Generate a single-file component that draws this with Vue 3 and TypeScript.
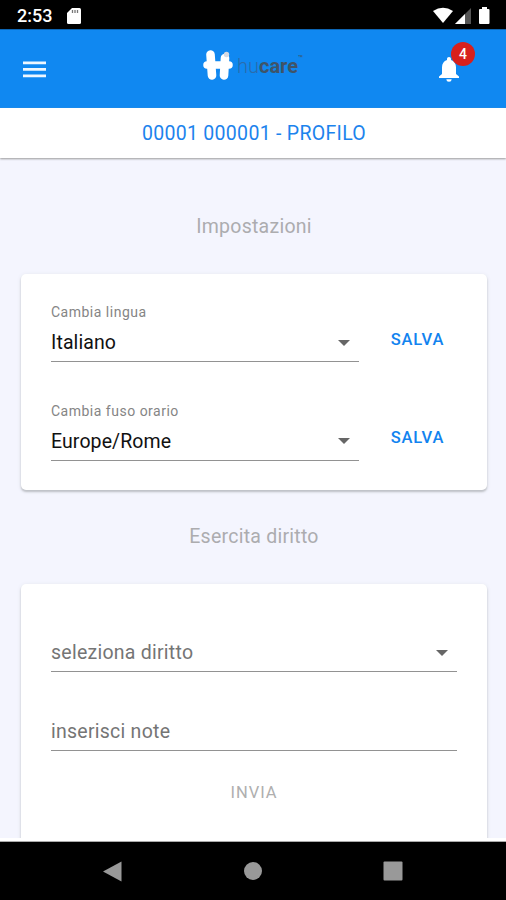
<script setup lang="ts">
interface Preference {
  label: string
  value: string
}

const preferences: Preference[] = [
  { label: 'Cambia lingua', value: 'Italiano' },
  { label: 'Cambia fuso orario', value: 'Europe/Rome' },
]
const notifications = 4
</script>

<template>
  <div class="screen">
    <div class="status">
      <span class="clock">2:53</span>
      <svg class="sd" viewBox="0 0 14 16" width="14" height="16">
        <path d="M5 0H12.5Q14 0 14 1.500V14.500Q14 16 12.500 16H1.500Q0 16 0 14.500V5Z" fill="#fff" />
        <path d="M5.500 2v3M8 2v3M10.500 2v3" stroke="#777" stroke-width="1.300" />
      </svg>
      <svg class="signals" viewBox="0 0 58 18" width="58" height="18">
        <path d="M0 4Q10 -2.500 20 4L10 16Z" fill="#fff" />
        <path d="M38 1V17H22Z" fill="#555" />
        <path d="M32 7V17H22Z" fill="#fff" />
        <path d="M49 2V0H54V2H55.500Q56.500 2 56.500 3V16Q56.500 17 55.500 17H47Q46 17 46 16V3Q46 2 47 2Z" fill="#fff" />
      </svg>
    </div>

    <header class="toolbar">
      <svg class="menu" viewBox="0 0 23 17" width="23" height="17">
        <path d="M0 1.800H23M0 8.300H23M0 14.800H23" stroke="#eef7ff" stroke-width="2.700" />
      </svg>
      <div class="brand">
        <svg viewBox="0 0 30 31" width="30" height="31">
          <path d="M7.500 4.500L9 25.500M22 8L21 25.500" stroke="#fff" stroke-width="8.600" stroke-linecap="round" />
          <path d="M4 15H26" stroke="#fff" stroke-width="7.500" stroke-linecap="round" />
          <circle cx="23.500" cy="4.500" r="2.700" fill="#d5d9e2" />
        </svg>
        <span class="word"><span class="hu">hu</span><b>care</b><span class="tm">™</span></span>
      </div>
      <div class="bell">
        <svg viewBox="0 0 20 25" width="20" height="25">
          <path d="M10 0C11.200 0 12 .8 12 2.100V3C15.200 4 17 6.800 17 10.300V17L20 19.500V21H0V19.500L3 17V10.300C3 6.800 4.800 4 8 3V2.100C8 .8 8.800 0 10 0Z" fill="#fff" />
          <path d="M7.300 22.200H12.700Q12.500 24.700 10 24.700T7.300 22.200Z" fill="#fff" />
        </svg>
        <span class="badge">{{ notifications }}</span>
      </div>
    </header>

    <div class="profile"><span>00001 000001 - PROFILO</span></div>

    <main class="content">
      <h2 class="title first">Impostazioni</h2>
      <section class="card prefs">
        <div v-for="item in preferences" :key="item.label" class="pref">
          <div class="field">
            <span class="label">{{ item.label }}</span>
            <div class="value">
              <span>{{ item.value }}</span>
              <svg viewBox="0 0 12 6" width="12" height="6"><path d="M0 0H12L6 6Z" fill="#666" /></svg>
            </div>
          </div>
          <button class="save">SALVA</button>
        </div>
      </section>

      <h2 class="title second">Esercita diritto</h2>
      <section class="card rights">
        <div class="value blank">
          <span>seleziona diritto</span>
          <svg viewBox="0 0 12 6" width="12" height="6"><path d="M0 0H12L6 6Z" fill="#666" /></svg>
        </div>
        <div class="value blank note"><span>inserisci note</span></div>
        <button class="send">INVIA</button>
      </section>
    </main>
    <div class="edge"></div>

    <nav class="navbar">
      <svg viewBox="0 0 19 21" width="19" height="21"><path d="M18.500 .5V20.500L0 10.500Z" fill="#999" /></svg>
      <svg viewBox="0 0 18 18" width="18" height="18"><circle cx="9" cy="9" r="9" fill="#999" /></svg>
      <svg viewBox="0 0 20 20" width="20" height="20"><rect x=".5" y=".5" width="19" height="19" rx="1" fill="#999" /></svg>
    </nav>
  </div>
</template>

<style>
body {
  margin: 0;
  background: #000;
}
</style>

<style scoped>
.screen {
  width: 506px;
  height: 900px;
  display: flex;
  flex-direction: column;
  overflow: hidden;
  background: #f4f5fe;
  font-family: Roboto, "Liberation Sans", sans-serif;
}
svg {
  display: block;
  flex: none;
}
.status {
  box-sizing: border-box;
  height: 29px;
  flex: none;
  display: flex;
  align-items: center;
  padding: 2px 15px 0 17px;
  background: #000;
  color: #fff;
}
.clock {
  width: 50px;
  font-size: 18px;
  font-weight: 500;
  line-height: 26px;
}
.signals {
  margin-left: auto;
}
.toolbar {
  box-sizing: border-box;
  height: 79px;
  flex: none;
  display: flex;
  align-items: flex-start;
  padding: 0 47px 0 23px;
  background: #1088f1;
  border-top: 1px solid #0c65b3;
}
.menu {
  margin-top: 31px;
}
.brand {
  display: flex;
  margin: 20px 0 0 157px;
}
.word {
  margin-left: 4px;
  font-size: 20px;
  line-height: 32px;
  color: #3f5468;
  display: flex;
}
.hu {
  font-weight: 300;
  color: #2b6cab;
}
.tm {
  font-size: 8px;
  line-height: 18px;
}
.bell {
  position: relative;
  margin: 27px 0 0 auto;
}
.badge {
  position: absolute;
  left: 12px;
  top: -15px;
  width: 24px;
  height: 24px;
  border-radius: 50%;
  background: #d8201d;
  color: #fff;
  font-size: 14px;
  font-weight: 500;
  line-height: 25px;
  text-align: center;
}
.profile {
  height: 50px;
  flex: none;
  background: #fff;
  text-align: center;
  font-size: 19.500px;
  line-height: 51px;
  letter-spacing: .3px;
  color: #1c83ed;
  box-shadow: 0 1px 2px #999;
  z-index: 1;
  padding-left: 2px;
}
.content {
  flex: 1;
  min-height: 0;
  overflow: hidden;
  padding: 0 19px 0 21px;
}
.title {
  margin: 0;
  text-align: center;
  font-size: 19.500px;
  font-weight: 400;
  line-height: 24px;
  letter-spacing: .25px;
  color: #acacaf;
}
.first {
  margin-top: 57px;
}
.second {
  margin-top: 35px;
}
.card {
  box-sizing: border-box;
  background: #fff;
  border-radius: 5px;
  box-shadow: 0 2px 2px #bfc2c8, 0 1px 4px #dfe1e8;
}
.prefs {
  height: 216px;
  margin-top: 35px;
  padding: 30px 30px 0;
}
.pref {
  height: 98.500px;
  display: flex;
}
.field {
  width: 308px;
}
.label {
  display: block;
  font-size: 14px;
  line-height: 16px;
  letter-spacing: .5px;
  color: #858585;
}
.value {
  box-sizing: border-box;
  height: 42px;
  display: flex;
  justify-content: space-between;
  align-items: center;
  padding: 4px 9px 0 0;
  border-bottom: 1px solid #929292;
  font-size: 19.500px;
  letter-spacing: .1px;
  color: #111;
}
button {
  border: 0;
  padding: 0;
  background: none;
  font-family: inherit;
  font-weight: 500;
  font-size: 16.500px;
  letter-spacing: .8px;
}
.save {
  width: 56px;
  height: 30px;
  margin: 20px 0 0 30.500px;
  color: #1283ef;
}
.rights {
  height: 290px;
  margin-top: 35px;
  padding: 46px 30px 0;
}
.blank {
  color: #757575;
  letter-spacing: .25px;
}
.note {
  margin-top: 37px;
}
.send {
  display: block;
  margin: 32px auto 0;
  color: #afafaf;
  font-weight: 400;
  letter-spacing: 1px;
}
.edge {
  height: 4px;
  flex: none;
  background: #fff;
  box-sizing: border-box;
  border-bottom: 1px solid #aaa;
}
.navbar {
  height: 58px;
  flex: none;
  display: flex;
  align-items: center;
  justify-content: space-between;
  padding: 0 103px;
  background: #000;
}
</style>
